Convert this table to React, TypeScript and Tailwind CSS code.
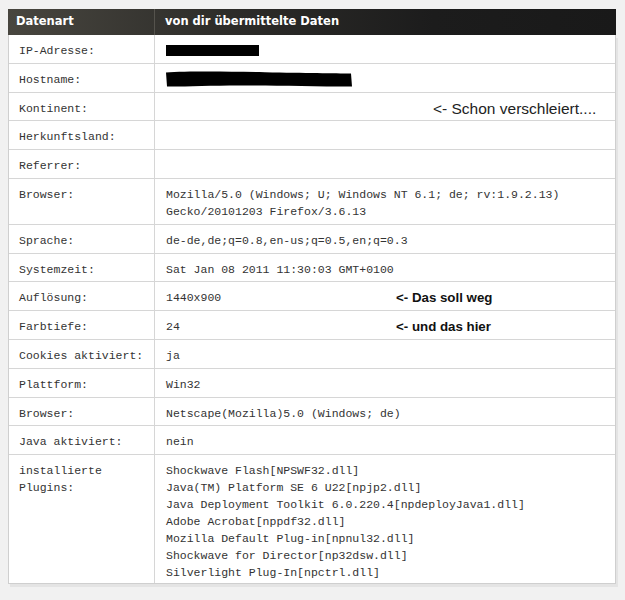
import React from "react";

const mono = { fontFamily: '"Liberation Mono", "Courier New", monospace' };

type Row = { label: React.ReactNode; value: React.ReactNode; last?: boolean };

function IpBar() {
  return <span className="mt-[3px] block h-[11px] w-[93px] bg-black" />;
}

function HostBlob() {
  return (
    <svg width="190" height="18" viewBox="0 0 190 18" className="-ml-[1px] -mt-[1px] block">
      <path
        d="M1 2.5 C 20 1.2, 60 1.4, 100 2.2 C 140 3.0, 170 3.2, 186 3.6 L 187 16.6 C 150 16.4, 110 15.8, 80 15.4 C 50 15.2, 20 16.6, 2 16.4 Z"
        fill="#000"
      />
    </svg>
  );
}

export default function App() {
  const rows: Row[] = [
    { label: "IP-Adresse:", value: <IpBar /> },
    { label: "Hostname:", value: <HostBlob /> },
    {
      label: "Kontinent:",
      value: (
        <span
          className="ml-[267px] block text-[15.5px] leading-[17px] text-[#222]"
          style={{ fontFamily: '"Liberation Sans", Arial, sans-serif' }}
        >
          &lt;- Schon verschleiert....
        </span>
      ),
    },
    { label: "Herkunftsland:", value: "" },
    { label: "Referrer:", value: "" },
    {
      label: "Browser:",
      value: (
        <>
          Mozilla/5.0 (Windows; U; Windows NT 6.1; de; rv:1.9.2.13)
          <br />
          Gecko/20101203 Firefox/3.6.13
        </>
      ),
    },
    { label: "Sprache:", value: "de-de,de;q=0.8,en-us;q=0.5,en;q=0.3" },
    { label: "Systemzeit:", value: "Sat Jan 08 2011 11:30:03 GMT+0100" },
    {
      label: "Auflösung:",
      value: (
        <div className="flex items-center">
          <span className="w-[230px]">1440x900</span>
          <span
            className="text-[13.3px] font-bold text-[#111]"
            style={{ fontFamily: '"Liberation Sans", Arial, sans-serif' }}
          >
            &lt;- Das soll weg
          </span>
        </div>
      ),
    },
    {
      label: "Farbtiefe:",
      value: (
        <div className="flex items-center">
          <span className="w-[230px]">24</span>
          <span
            className="text-[13.3px] font-bold text-[#111]"
            style={{ fontFamily: '"Liberation Sans", Arial, sans-serif' }}
          >
            &lt;- und das hier
          </span>
        </div>
      ),
    },
    { label: "Cookies aktiviert:", value: "ja" },
    { label: "Plattform:", value: "Win32" },
    { label: "Browser:", value: "Netscape(Mozilla)5.0 (Windows; de)" },
    { label: "Java aktiviert:", value: "nein" },
    {
      label: (
        <>
          installierte
          <br />
          Plugins:
        </>
      ),
      value: (
        <>
          Shockwave Flash[NPSWF32.dll]
          <br />
          Java(TM) Platform SE 6 U22[npjp2.dll]
          <br />
          Java Deployment Toolkit 6.0.220.4[npdeployJava1.dll]
          <br />
          Adobe Acrobat[nppdf32.dll]
          <br />
          Mozilla Default Plug-in[npnul32.dll]
          <br />
          Shockwave for Director[np32dsw.dll]
          <br />
          Silverlight Plug-In[npctrl.dll]
        </>
      ),
      last: true,
    },
  ];

  return (
    <div className="min-h-[600px] w-[625px] bg-[#f1f1f1] pl-[8px] pt-[9px]">
      <div className="w-[608px]">
        <div
          className="grid h-[26px] grid-cols-[147px_1fr] items-center bg-[linear-gradient(to_right,#48463f,#2e2d2a_35%,#1c1c1c_70%,#191919)] text-[11.5px] font-bold text-white"
          style={{ fontFamily: '"DejaVu Sans", Verdana, sans-serif' }}
        >
          <div className="flex h-full items-center border-r border-[#55534d] pl-[8px]">Datenart</div>
          <div className="pl-[10px]">von dir übermittelte Daten</div>
        </div>
        <div
          className="border-x border-b border-[#cfcfcf] bg-white text-[11.5px] text-[#333] shadow-[2px_3px_0_#e4e4e4]"
          style={mono}
        >
          {rows.map((r, i) => (
            <div
              key={i}
              className={`grid grid-cols-[146px_1fr] leading-[17px] ${r.last ? "" : "border-b border-[#d6d6d6]"}`}
            >
              <div
                className={`border-r border-[#d6d6d6] pl-[10px] pt-[7px] ${r.last ? "pb-[1.8px]" : "pb-[3.8px]"}`}
              >
                {r.label}
              </div>
              <div
                className={`min-h-[17px] pl-[11px] pt-[7px] ${r.last ? "pb-[1.8px]" : "pb-[3.8px]"}`}
              >
                {r.value}
              </div>
            </div>
          ))}
        </div>
      </div>
    </div>
  );
}
